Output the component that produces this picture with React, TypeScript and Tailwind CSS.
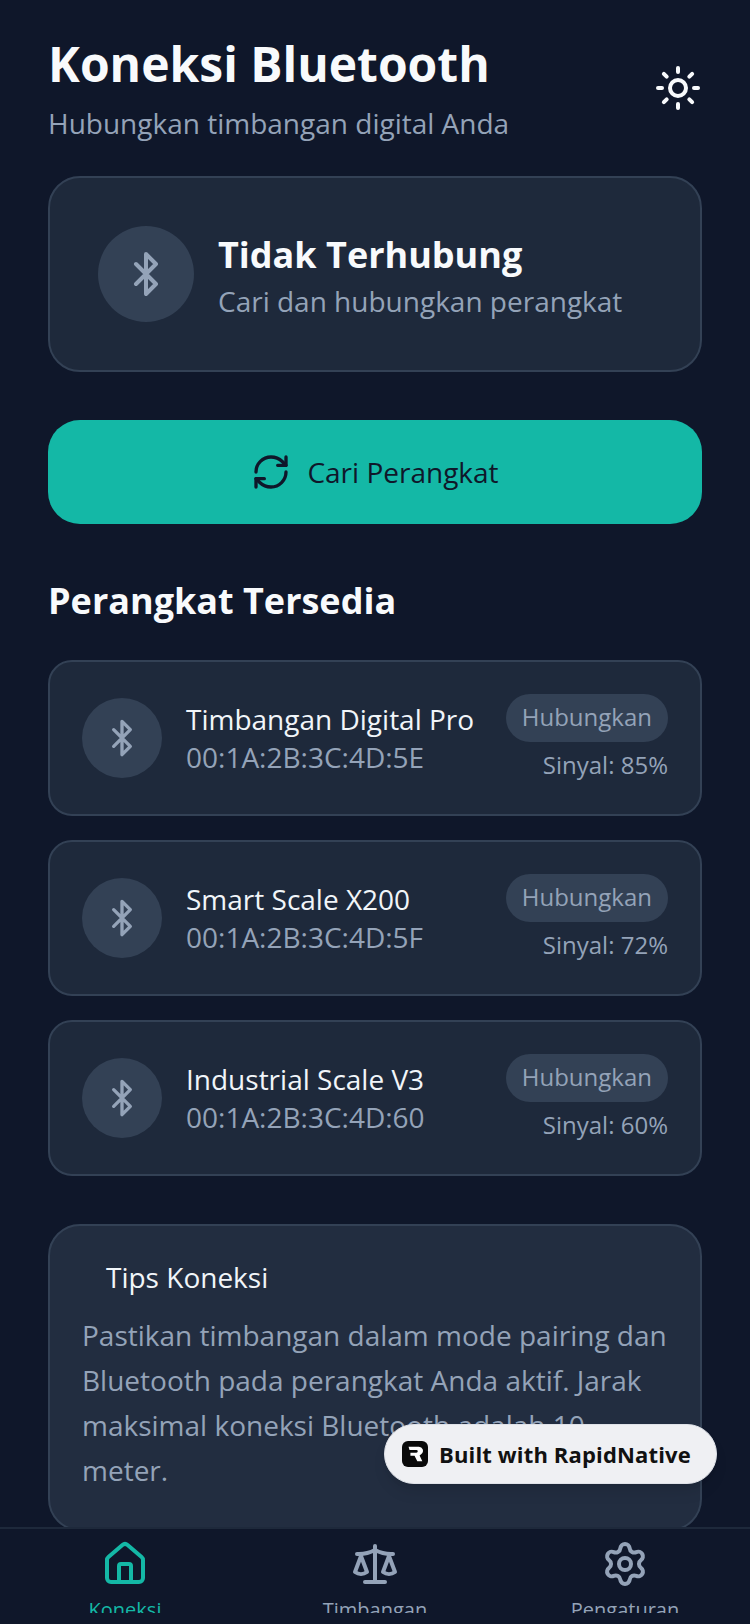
import React from "react";
import { Bluetooth, RefreshCw, Sun, House, Scale, Settings } from "lucide-react";

const devices = [
  { name: "Timbangan Digital Pro", mac: "00:1A:2B:3C:4D:5E", signal: "Sinyal: 85%" },
  { name: "Smart Scale X200", mac: "00:1A:2B:3C:4D:5F", signal: "Sinyal: 72%" },
  { name: "Industrial Scale V3", mac: "00:1A:2B:3C:4D:60", signal: "Sinyal: 60%" },
];

function Device({ name, mac, signal }: { name: string; mac: string; signal: string }) {
  return (
    <div className="flex h-[156px] items-center rounded-[24px] border-2 border-[#334155] bg-[#1e293b] px-[32px]">
      <div className="flex h-[80px] w-[80px] shrink-0 items-center justify-center rounded-full bg-[#334155]">
        <Bluetooth size={40} strokeWidth={2} className="text-[#94a3b8]" />
      </div>
      <div className="ml-[24px] flex-1">
        <div className="text-[28px] leading-[38px] text-[#f1f5f9]">{name}</div>
        <div className="text-[28px] leading-[38px] text-[#94a3b8]">{mac}</div>
      </div>
      <div className="flex flex-col items-end pt-[1px]">
        <div className="rounded-full bg-[#334155] px-[16px] pt-[5px] pb-[7px] text-[24px] leading-[36px] text-[#94a3b8]">Hubungkan</div>
        <div className="mt-[5px] text-[24px] leading-[36px] text-[#94a3b8]">{signal}</div>
      </div>
    </div>
  );
}

function NavItem({ icon, label, active }: { icon: React.ReactNode; label: string; active?: boolean }) {
  return (
    <div className="flex flex-1 flex-col items-center pt-[11px]">
      {icon}
      <div className={`mt-[8px] text-[20px] leading-[28px] ${active ? "text-[#14b8a6]" : "text-[#94a3b8]"}`}>{label}</div>
    </div>
  );
}

export default function App() {
  return (
    <div className="relative flex h-[1624px] w-[750px] flex-col overflow-hidden bg-[#0f172a] font-['Open_Sans',sans-serif]">
      <div className="min-h-0 flex-1 overflow-hidden px-[48px] pt-[32px]">
        <div className="flex items-center justify-between">
          <div>
            <div className="text-[48px] font-bold leading-[64px] text-[#f8fafc]">Koneksi Bluetooth</div>
            <div className="mt-[6px] text-[28px] leading-[42px] text-[#94a3b8]">Hubungkan timbangan digital Anda</div>
          </div>
          <Sun size={48} strokeWidth={2} className="text-[#f8fafc]" />
        </div>

        <div className="mt-[32px] flex h-[196px] items-center rounded-[32px] border-2 border-[#334155] bg-[#1e293b] px-[48px]">
          <div className="flex h-[96px] w-[96px] shrink-0 items-center justify-center rounded-full bg-[#334155]">
            <Bluetooth size={48} strokeWidth={2} className="text-[#94a3b8]" />
          </div>
          <div className="ml-[24px] pt-[4px]">
            <div className="text-[36px] font-bold leading-[50px] text-[#f8fafc]">Tidak Terhubung</div>
            <div className="text-[28px] leading-[42px] text-[#94a3b8]">Cari dan hubungkan perangkat</div>
          </div>
        </div>

        <div className="mt-[48px] flex h-[104px] items-center justify-center rounded-[32px] bg-[#14b8a6]">
          <RefreshCw size={40} strokeWidth={2} className="text-[#0f172a]" />
          <span className="ml-[16px] text-[28px] leading-[40px] text-[#0f172a]">Cari Perangkat</span>
        </div>

        <div className="mt-[50px] text-[36px] font-bold leading-[54px] text-[#f8fafc]">Perangkat Tersedia</div>

        <div className="mt-[32px] flex flex-col gap-[24px]">
          {devices.map((d) => (
            <Device key={d.name} {...d} />
          ))}
        </div>

        <div className="mt-[48px] rounded-[32px] border-2 border-[#334155] bg-[#222d40] px-[32px] pt-[31px] pb-[36px]">
          <div className="pl-[24px] text-[28px] leading-[40px] text-[#f1f5f9]">Tips Koneksi</div>
          <div className="mt-[16px] text-[28px] leading-[45px] text-[#94a3b8]">
            Pastikan timbangan dalam mode pairing dan Bluetooth pada perangkat Anda aktif. Jarak maksimal koneksi Bluetooth adalah 10 meter.
          </div>
        </div>
      </div>

      <div className="h-[97px] shrink-0 border-t-2 border-[#1e293b] bg-[#0f172a] pb-[11px]">
        <div className="flex h-full overflow-hidden">
          <NavItem active label="Koneksi" icon={<House size={48} strokeWidth={2} className="shrink-0 text-[#14b8a6]" />} />
          <NavItem label="Timbangan" icon={<Scale size={48} strokeWidth={2} className="shrink-0 text-[#94a3b8]" />} />
          <NavItem label="Pengaturan" icon={<Settings size={48} strokeWidth={2} className="shrink-0 text-[#94a3b8]" />} />
        </div>
      </div>

      <div className="absolute left-[384px] top-[1424px] flex h-[60px] w-[333px] items-center rounded-full border border-[#dfe2e8] bg-[#eff0f3] pl-[17px] shadow-lg">
        <div className="flex h-[26px] w-[26px] items-center justify-center rounded-[6px] bg-[#0a0a0a]">
          <svg viewBox="0 0 24 24" width="22" height="22"><path d="M5 4h11a4.5 4.5 0 0 1 3 8l-2 1.5 3 6.5h-5.5l-3-6H7v-3.5h6.5a1 1 0 0 0 0-3H6z" fill="#fff" /></svg>
        </div>
        <span className="ml-[11px] text-[22px] font-bold leading-[32px] tracking-[0.15px] text-[#111]">Built with RapidNative</span>
      </div>
    </div>
  );
}
